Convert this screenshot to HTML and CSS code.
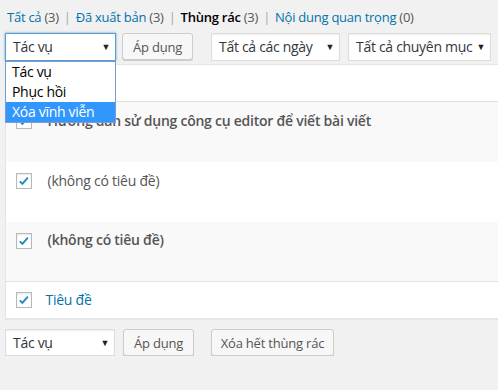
FILE: index.html
```html
<!DOCTYPE html>
<html lang="vi">
<head>
    <meta charset="UTF-8">
    <title>Bài viết - Thùng rác</title>
    <link rel="stylesheet" href="styles.css">
</head>
<body>
    <div class="wrap">
        <ul class="subsubsub">
            <li><a href="#">Tất cả <span class="count">(3)</span></a><span class="sep">|</span></li>
            <li><a href="#">Đã xuất bản <span class="count">(3)</span></a><span class="sep">|</span></li>
            <li><a href="#" class="current">Thùng rác <span class="count">(3)</span></a><span class="sep">|</span></li>
            <li><a href="#">Nội dung quan trọng</a> <span class="count">(0)</span></li>
        </ul>

        <div class="tablenav top">
            <div class="select focus w-action">
                <span>Tác vụ</span><i class="arrow">▼</i>
                <ul class="options">
                    <li>Tác vụ</li>
                    <li>Phục hồi</li>
                    <li class="hover">Xóa vĩnh viễn</li>
                </ul>
            </div>
            <button class="button">Áp dụng</button>
            <div class="select w-date"><span>Tất cả các ngày</span><i class="arrow">▼</i></div>
            <div class="select w-cat"><span>Tất cả chuyên mục</span><i class="arrow">▼</i></div>
        </div>

        <table class="posts">
            <thead>
                <tr>
                    <th class="check"><span class="cb"></span></th>
                    <th class="title"><a href="#">Tiêu đề</a></th>
                </tr>
            </thead>
            <tbody>
                <tr class="alt">
                    <th class="check"><span class="cb on"><svg viewBox="0 0 16 16"><path d="M3.2 8.4l3 2.8 6.2-7" /></svg></span></th>
                    <td class="bold">Hướng dẫn sử dụng công cụ editor để viết bài viết</td>
                </tr>
                <tr>
                    <th class="check"><span class="cb on"><svg viewBox="0 0 16 16"><path d="M3.2 8.4l3 2.8 6.2-7" /></svg></span></th>
                    <td>(không có tiêu đề)</td>
                </tr>
                <tr class="alt">
                    <th class="check"><span class="cb on"><svg viewBox="0 0 16 16"><path d="M3.2 8.4l3 2.8 6.2-7" /></svg></span></th>
                    <td class="bold">(không có tiêu đề)</td>
                </tr>
            </tbody>
            <tfoot>
                <tr>
                    <th class="check"><span class="cb on"><svg viewBox="0 0 16 16"><path d="M3.2 8.4l3 2.8 6.2-7" /></svg></span></th>
                    <th class="title"><a href="#">Tiêu đề</a></th>
                </tr>
            </tfoot>
        </table>

        <div class="tablenav bottom">
            <div class="select small w-action2"><span>Tác vụ</span><i class="arrow">▼</i></div>
            <button class="button">Áp dụng</button>
            <button class="button wide">Xóa hết thùng rác</button>
        </div>
    </div>
</body>
</html>
```

FILE: styles.css
```css
*{
    margin:0;
    padding:0;
    box-sizing:border-box;
}
html,body{
    background:#f1f1f1;
    overflow:hidden;
}
body{
    font-family:"Open Sans","Noto Sans",sans-serif;
    font-size:13px;
    color:#444;
}
ul li{
    list-style-type:none;
}
a{
    color:#0073aa;
    text-decoration:none;
}
.wrap{
    padding:7px 0 0 5px;
    width:530px;
}

/* các liên kết lọc */
.subsubsub{
    display:flex;
    padding-left:2px;
    height:20px;
    line-height:20px;
    font-size:13px;
    letter-spacing:-0.25px;
}
.subsubsub .count{
    color:#555;
    font-weight:normal;
}
.subsubsub .current{
    color:#000;
    font-weight:600;
}
.subsubsub .sep{
    color:#a0a5aa;
    margin:0 5px 0 5px;
}

/* thanh công cụ */
.tablenav{
    display:flex;
    align-items:flex-start;
    gap:6px;
}
.tablenav.top{
    margin-top:6px;
    height:31px;
}
.tablenav.bottom{
    margin-top:10px;
}
.select{
    position:relative;
    height:28px;
    background:#fff;
    border:1px solid #ddd;
    box-shadow:inset 0 1px 2px rgba(0,0,0,0.07);
    color:#32373c;
    font-size:14px;
    line-height:26px;
    padding-left:7px;
    letter-spacing:-0.3px;
    white-space:nowrap;
}
.select.focus{
    border-color:#5b9dd9;
    box-shadow:0 0 2px rgba(30,140,190,0.8);
}
.select .arrow{
    position:absolute;
    right:5px;
    top:0;
    font-style:normal;
    font-size:9px;
    color:#222;
}
.w-action{ width:111px; }
.w-date{ width:129px; margin-left:12px; }
.w-cat{ width:143px; margin-left:2px; }
.w-action2{ width:110px; height:27px; line-height:25px; }

.select .options{
    position:absolute;
    z-index:2;
    left:-1px;
    top:27px;
    width:111px;
    background:#fff;
    border:1px solid #7a9cd3;
    line-height:20px;
    color:#000;
}
.select .options li{
    padding-left:6px;
    height:20px;
}
.select .options li.hover{
    background:#3297fd;
    color:#fff;
}

.button{
    height:27px;
    padding:0 4px;
    background:#f7f7f7;
    border:1px solid #ccc;
    border-radius:3px;
    box-shadow:0 1px 0 #ccc;
    color:#555;
    font-family:"Open Sans","Noto Sans",sans-serif;
    font-size:13px;
    letter-spacing:-0.2px;
    white-space:nowrap;
}
.tablenav.top .button{
    width:71px;
}
.tablenav.bottom .button{
    width:71px;
    margin-left:2px;
}
.tablenav.bottom .button.wide{
    width:123px;
    margin-left:11px;
}

/* bảng bài viết */
.posts{
    margin-top:0;
    width:525px;
    border:1px solid #e5e5e5;
    border-collapse:collapse;
    background:#fff;
    box-shadow:0 1px 1px rgba(0,0,0,0.04);
    font-size:14px;
    letter-spacing:-0.25px;
}
.posts th,.posts td{
    text-align:left;
    vertical-align:top;
}
.posts .check{
    width:32px;
    padding:10px 0 0 10px;
}
.posts thead tr{
    height:36px;
    border-bottom:1px solid #e1e1e1;
}
.posts tbody tr{
    height:60px;
}
.posts tbody tr.alt{
    background:#f9f9f9;
}
.posts tbody .check{
    padding-top:11px;
}
.posts td{
    padding:8px 10px;
    line-height:21px;
    color:#555;
}
.posts td.bold{
    font-weight:600;
}
.posts tbody tr:last-child td{
    padding-top:7px;
}
.posts tfoot tr{
    height:37px;
    border-top:1px solid #e1e1e1;
}
.posts th.title{
    font-weight:normal;
    padding:7px 8px;
    line-height:22px;
}
.cb{
    display:block;
    width:16px;
    height:16px;
    border:1px solid #b4b9be;
    background:#fff;
    box-shadow:inset 0 1px 2px rgba(0,0,0,0.1);
}
.cb svg{
    display:block;
    width:14px;
    height:14px;
    fill:none;
    stroke:#1e8cbe;
    stroke-width:2.2;
}
```
